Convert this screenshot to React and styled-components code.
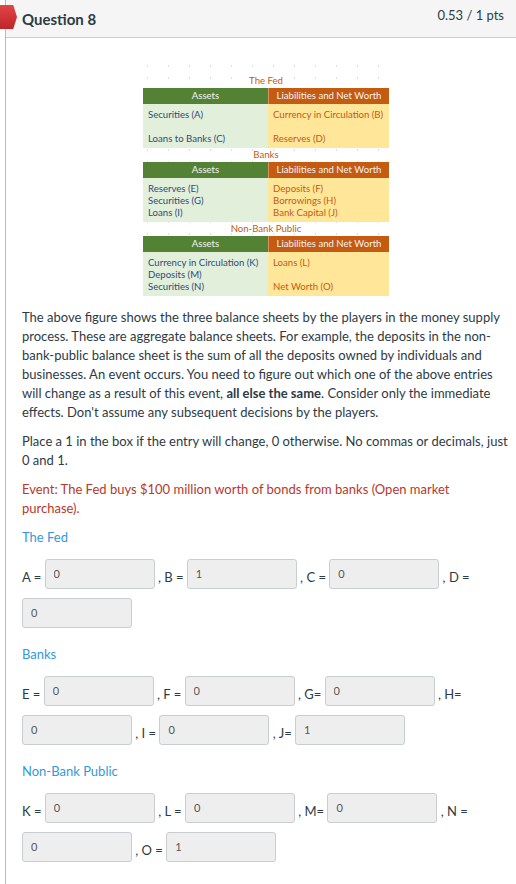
import React from 'react';
import styled, { createGlobalStyle } from 'styled-components';

const GlobalStyle = createGlobalStyle`
  body {
    margin: 0;
    background: #fff;
    font-family: Lato, "Noto Sans", sans-serif;
    color: #2d3b45;
  }
`;

const QuestionCard = styled.div`
  position: relative;
  margin-left: 5px;
  border-left: 1px solid #b5bcc2;
  min-height: 884px;
`;

const Flag = styled.div`
  position: absolute;
  left: -6px;
  top: 5px;
  width: 17px;
  height: 24px;
  background: linear-gradient(#e24646, #bd2529);
  clip-path: polygon(0 0, 78% 0, 100% 50%, 78% 100%, 0 100%);
`;

const Header = styled.div`
  display: flex;
  justify-content: space-between;
  align-items: flex-start;
  height: 37px;
  padding: 0 12px 0 16px;
  background: #f5f5f5;
  border-bottom: 1px solid #c7cdd1;
`;

const Title = styled.h2`
  margin: 0;
  padding-top: 9px;
  font-size: 15px;
  line-height: 20px;
  font-weight: 700;
`;

const Points = styled.div`
  padding-top: 5px;
  font-size: 13px;
  line-height: 20px;
`;

const Body = styled.div`
  padding: 20px 6px 20px 16px;
`;

const Figure = styled.div`
  width: 246px;
  margin: 0 auto 8px;
  padding: 16px 8px 4px;
  background-image: radial-gradient(circle, rgba(0, 0, 0, 0.13) 0.7px, transparent 1px);
  background-size: 21px 12px;
  background-position: 2px 2px;
`;

const Sheet = styled.div`
  display: grid;
  grid-template-columns: 125px 121px;
  font-size: 9.6px;
`;

const SheetTitle = styled.div`
  grid-column: 1 / -1;
  height: 14px;
  line-height: 14px;
  text-align: center;
  font-size: 9.6px;
  color: #c55a11;
`;

const HeadCell = styled.div`
  height: 16px;
  line-height: 16px;
  text-align: center;
  font-size: 9.6px;
  color: #f4f4f4;
  background: ${(p) => (p.$side === 'left' ? '#548235' : '#c55a11')};
  border-left: ${(p) => (p.$side === 'left' ? 'none' : '1px solid #d9925f')};
`;

const DataCell = styled.div`
  box-sizing: border-box;
  height: 44px;
  padding: 5px 2px 3px 5px;
  background: ${(p) => (p.$side === 'left' ? '#e2efda' : '#ffe699')};
  color: ${(p) => (p.$side === 'left' ? '#2e4a7d' : '#c55a11')};
`;

const Entry = styled.div`
  height: 12px;
  line-height: 12px;
  white-space: nowrap;
`;

const Para = styled.p`
  margin: 0 0 10px;
  font-size: 13px;
  line-height: 19px;
  color: ${(p) => p.$color || '#2d3b45'};
`;

const SectionLabel = styled.p`
  margin: 0 0 12px;
  font-size: 13px;
  line-height: 19px;
  color: #3598db;
`;

const AnswerBlock = styled.div`
  margin-bottom: 8px;
  font-size: 13px;
  line-height: 19px;
`;

const AnswerBox = styled.input`
  box-sizing: border-box;
  width: 110px;
  height: 30px;
  margin: 0 0 9px;
  padding: 0 8px 2px;
  border: 1px solid #c7cdd1;
  border-radius: 3px;
  background: #eeeeee;
  font-family: Lato, "Noto Sans", sans-serif;
  font-size: 11px;
  color: #555;
  vertical-align: 4px;
  outline: none;
`;

const sheets = [
  {
    title: 'The Fed',
    assets: ['Securities (A)', '', 'Loans to Banks (C)'],
    liabilities: ['Currency in Circulation (B)', '', 'Reserves (D)'],
  },
  {
    title: 'Banks',
    assets: ['Reserves (E)', 'Securities (G)', 'Loans (I)'],
    liabilities: ['Deposits (F)', 'Borrowings (H)', 'Bank Capital (J)'],
  },
  {
    title: 'Non-Bank Public',
    assets: ['Currency in Circulation (K)', 'Deposits (M)', 'Securities (N)'],
    liabilities: ['Loans (L)', '', 'Net Worth (O)'],
  },
];

const sections = [
  {
    name: 'The Fed',
    fields: [
      ['A = ', '0'],
      [' , B = ', '1'],
      [' , C = ', '0'],
      [' , D = ', '0'],
    ],
  },
  {
    name: 'Banks',
    fields: [
      ['E = ', '0'],
      [' , F = ', '0'],
      [' , G= ', '0'],
      [' , H= ', '0'],
      [' , I = ', '0'],
      [' , J= ', '1'],
    ],
  },
  {
    name: 'Non-Bank Public',
    fields: [
      ['K = ', '0'],
      [' , L = ', '0'],
      [' , M= ', '0'],
      [' , N = ', '0'],
      [' , O = ', '1'],
    ],
  },
];

const BalanceSheet = ({ sheet }) => (
  <Sheet>
    <SheetTitle>{sheet.title}</SheetTitle>
    <HeadCell $side="left">Assets</HeadCell>
    <HeadCell $side="right">Liabilities and Net Worth</HeadCell>
    <DataCell $side="left">
      {sheet.assets.map((a, i) => (
        <Entry key={i}>{a}</Entry>
      ))}
    </DataCell>
    <DataCell $side="right">
      {sheet.liabilities.map((l, i) => (
        <Entry key={i}>{l}</Entry>
      ))}
    </DataCell>
  </Sheet>
);

export default function App() {
  return (
    <>
      <GlobalStyle />
      <QuestionCard>
        <Flag />
        <Header>
          <Title>Question 8</Title>
          <Points>0.53 / 1 pts</Points>
        </Header>
        <Body>
          <Figure>
            {sheets.map((s) => (
              <BalanceSheet key={s.title} sheet={s} />
            ))}
          </Figure>
          <Para>
            The above figure shows the three balance sheets by the players in the money supply
            process. These are aggregate balance sheets. For example, the deposits in the
            non-bank-public balance sheet is the sum of all the deposits owned by individuals and
            businesses. An event occurs. You need to figure out which one of the above entries
            will change as a result of this event, <strong>all else the same</strong>. Consider
            only the immediate effects. Don't assume any subsequent decisions by the players.
          </Para>
          <Para>
            Place a 1 in the box if the entry will change, 0 otherwise. No commas or decimals,
            just 0 and 1.
          </Para>
          <Para $color="#ba372a">
            Event: The Fed buys $100 million worth of bonds from banks (Open market purchase).
          </Para>
          {sections.map((sec) => (
            <React.Fragment key={sec.name}>
              <SectionLabel>{sec.name}</SectionLabel>
              <AnswerBlock>
                {sec.fields.map(([label, value]) => (
                  <React.Fragment key={label}>
                    {label}
                    <AnswerBox readOnly value={value} />
                  </React.Fragment>
                ))}
              </AnswerBlock>
            </React.Fragment>
          ))}
        </Body>
      </QuestionCard>
    </>
  );
}
